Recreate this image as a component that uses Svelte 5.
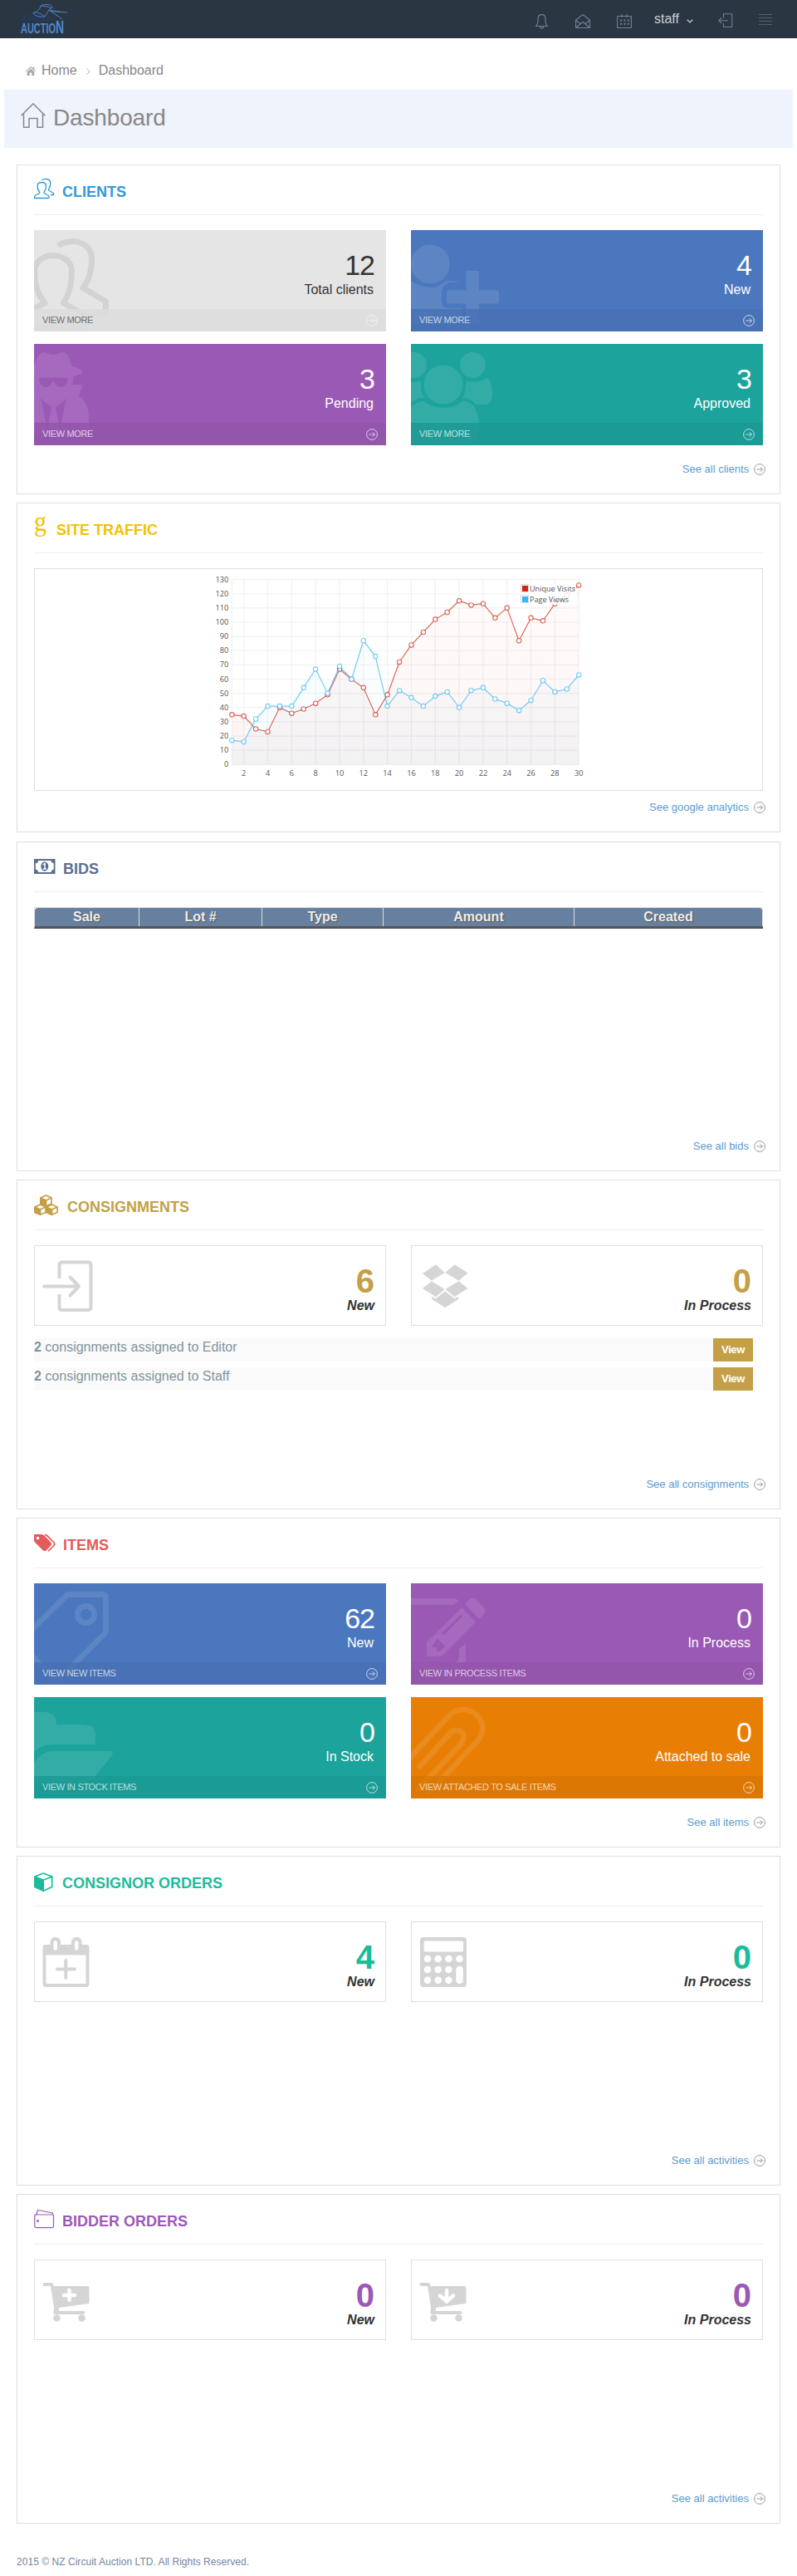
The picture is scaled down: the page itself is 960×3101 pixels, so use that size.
<script>
  const art = {
    people: '<g fill="none" stroke="#000" stroke-opacity=".08" stroke-width="7"><path d="M-15 102 13 88C4 77 .5 62 .5 50c0-12 10.500-19.500 22.500-19.500S45.500 38 45.500 50c0 12-2.500 26-10 38l27 14.500V116H-15" stroke-linejoin="round"/><path d="M29 19c5-4 11-5.500 18-5.500 12 0 22.500 8.500 22.500 20.500 0 14-2.500 26-10.500 35.500L86.500 86v13H73" stroke-linejoin="round"/></g>',
    add: '<circle cx="23.300" cy="41" r="23.500"/><path d="M0 61Q23 77 43 61Q52 60 58 63H45Q37 67 37 75V86Q37 94 45 94H61V112H0ZM45 72.500H66.500V50.500Q66.500 49 68 49H80.500Q82 49 82 50.500V72.500H104Q106 72.500 106 74.500V86.500Q106 88.500 104 88.500H82V112H66.500V88.500H45Q43 88.500 43 86.500V74.500Q43 72.500 45 72.500Z"/>',
    spy: '<path fill-rule="evenodd" d="M0 27C4 16 7 10 12 10C16 10 18 13 23 13S30 10 34 10C40 10 43 17 46 27Q58 30 58 34Q56 38 47 39V43Q47 47 45 49H58.500L54 63Q66 70 66 90V112H0V49H1L0 46ZM6 41Q23 40 41 41C40 49 37 52 32 52C26 52 25 45 23 45S20 52 14 52C9 52 6 47 6 41ZM8 65Q12 70 21 76L16 103ZM39 65Q34 72 26 76L31 103Z"/>',
    group: '<circle cx="3.500" cy="25.500" r="15.500"/><circle cx="74.500" cy="25.500" r="15.500"/><circle cx="39" cy="49" r="23.500"/><path d="M0 46 12 45V52Q12 59 17 65Q7 65 0 71ZM66 45Q81 48 91 41C97 43 98 54 98 62Q97 73 89 73H78Q72 65 62 65Q67 58 66 45ZM0 76Q7 69 15 69Q39 85 63 69C77 69 82 83 82 103Q82 120 67 120H0Z"/>',
    tag: '<g fill="none" stroke="#fff" stroke-width="6.800"><path d="M-2 55 39.500 14.500Q41 13.500 43 13.500H82Q86.500 13.500 86.500 17V56Q86.500 59 84.500 61L32 114Q28 117 24 114L-4 86"/><circle cx="62.500" cy="37.500" r="10.200"/></g>',
    pencil: '<path fill-rule="evenodd" d="M0 18H50Q55 18 57 21L53 25Q51 26 49 26H0ZM66 73V91Q66 104 50 104Q40 104 0 104V96H50Q58 96 58 87V79ZM61 29.500 78 46.500 37 88H19V71ZM65 25 71 19Q74 16 78 19L88 29Q91 33 88 37L82 43ZM38 59Q37 62 40 62L62 40Q62 37 60 38ZM26 75 32 66 41 76 35 82H31V77H26Z"/>',
    folder: '<path d="M0 18H14Q27 20 27 33H60Q74 34 74 46V57H22Q9 57 0 66ZM22 65H92Q96 65 94 70L74 95Q68 103 57 103H0V79Q10 65 22 65Z"/>',
    clip: '<g fill="none" stroke="#fff" stroke-width="6.600" stroke-linecap="round"><path d="M-6 78 46 22C55 13 68 13 77 20C89 30 89 43 80 53L35 101 20 115"/><path d="M11 83 47 43.500C53 37 61 40 63 45C65 50 62 54 60 56.500L22 97 8 111"/></g>',
    login: '<g fill="none" stroke="#d5d5d5" stroke-width="4"><path d="M30.500 40V24Q30.500 20.500 34 20.500H65Q68.500 20.500 68.500 24V75Q68.500 78 65 78H34Q30.500 78 30.500 75V59"/><path d="M12 49.500H53M43.500 38.500 54 49.500 43.500 60.500" stroke-linecap="round" stroke-linejoin="round"/></g>',
    boxes: '<path d="M30 23 41 33 25 43 13.500 34ZM52.500 23 69 33.500 57.500 43 41 33ZM25 43 41 53 30 62.500 13.500 52ZM57.500 43 69 52 52.500 62.500 41 53ZM41 55 52.500 64 57.500 61.500V65L41 75.500 25 65V61.500L30 64Z" stroke="#fff" stroke-width=".6"/>',
    calendar: '<path fill-rule="evenodd" d="M14 28H19.500V25A6.200 6.200 0 0 1 32 25V28H45V25A6.200 6.200 0 0 1 57.500 25V28H62.500Q66.500 28 66.500 32V75Q66.500 79 62.500 79H14Q10.500 79 10.500 75V32Q10.500 28 14 28ZM14.500 40.500V75H62.500V40.500ZM23.500 25V33A2.300 2.300 0 0 0 28 33V25A2.300 2.300 0 0 0 23.500 25ZM49 25V33A2.300 2.300 0 0 0 53.500 33V25A2.300 2.300 0 0 0 49 25Z"/><path d="M38.300 47V68M28 57.500H49" stroke="#d5d5d5" stroke-width="4" stroke-linecap="round"/>',
    calculator: '<rect x="11" y="19" width="56" height="60" rx="4"/><g fill="#fff"><rect x="15.500" y="23.500" width="47.500" height="13" rx="2"/><circle cx="20" cy="45" r="4.300"/><circle cx="32.700" cy="45" r="4.300"/><circle cx="45.400" cy="45" r="4.300"/><circle cx="58.500" cy="45" r="4.300"/><circle cx="20" cy="58" r="4.300"/><circle cx="32.700" cy="58" r="4.300"/><circle cx="45.400" cy="58" r="4.300"/><circle cx="20" cy="70.700" r="4.300"/><circle cx="32.700" cy="70.700" r="4.300"/><circle cx="45.400" cy="70.700" r="4.300"/><rect x="54.200" y="53.700" width="8.600" height="21.300" rx="4.300"/></g>',
    cartadd: '<path d="M12 28H21Q23 28 23.500 32H64Q66.500 32 66.500 35V53L30 58V62H59Q61.500 62 61.500 64T59 66H25Q23 66 23.500 63L24 58 20 32H12Q10.500 32 10.500 30T12 28Z"/><circle cx="27.500" cy="70.500" r="4.300"/><circle cx="57.500" cy="70.500" r="4.300"/><path d="M42.500 37V49M36 43H49" stroke="#fff" stroke-width="4.500" stroke-linecap="round"/>',
    cartdown: '<path d="M12 28H21Q23 28 23.500 32H64Q66.500 32 66.500 35V53L30 58V62H59Q61.500 62 61.500 64T59 66H25Q23 66 23.500 63L24 58 20 32H12Q10.500 32 10.500 30T12 28Z"/><circle cx="27.500" cy="70.500" r="4.300"/><circle cx="57.500" cy="70.500" r="4.300"/><path d="M43 37V50M35 43.500 43 50.500 51 43.500" fill="none" stroke="#fff" stroke-width="4.500" stroke-linecap="round"/>',
    hClients: '<g fill="none" stroke="currentColor" stroke-width="1.300" stroke-linejoin="round"><path d="M.500 19.500V18Q.5 17 1.500 16.300L6.200 13.700Q7.300 13 6.500 12C4.500 9.500 3.900 7 4.200 4C4.500 1.500 7 .5 9.300 .5S14 1.500 14.400 4C14.700 7 14 9.500 12.200 12Q11.400 13 12.500 13.700L17 16.300Q18 17 18 18V18.700Q18 19.500 17 19.500Z"/><path d="M9.500-2C11-3.300 13-3.700 14.800-3.500C18-3.300 19.800-1 19.800 2C19.800 5 19 7 17.500 8.800Q16.800 9.700 18 10.300L22.500 13Q23.500 13.500 23.500 14.500V15.500H20"/></g>',
    hGoogle: '<text x="0" y="13" font-family="Liberation Serif, serif" font-size="33" font-weight="400" fill="currentColor" textLength="15" lengthAdjust="spacingAndGlyphs">g</text>',
    hBids: '<path fill-rule="evenodd" fill="currentColor" d="M0 0H25.500V18H0ZM1.800 5.500V12.500Q4.800 13 5.300 16H20.300Q20.800 13 23.700 12.500V5.500Q20.800 5 20.300 2H5.300Q4.800 5 1.800 5.500Z"/><ellipse cx="12.800" cy="9" rx="4.500" ry="5.700" fill="currentColor"/><path d="M10.800 7 13 5.500V12M10.800 12H15" stroke="#fff" stroke-width="1.500" fill="none"/>',
    hCubes: '<g stroke="currentColor" stroke-width="1.700" stroke-linejoin="round" fill="#fff"><path d="M14.500-2 21 .8V8L14.500 11 8 8V.8ZM7.500 9 14 12V18.500L7.500 21.300 1 18.500V12ZM21.500 9 28 12V18.500L21.500 21.300 15 18.500V12Z"/><path fill="currentColor" d="M8 1 14.500 4V11L8 8ZM1 12 7.500 15V21L1 18.500ZM15 12 21.500 15V21L15 18.500Z"/><path fill="none" d="M14.500 4 21 1M7.500 15 14 12M21.500 15 28 12"/></g>',
    hTags: '<path fill="currentColor" fill-rule="evenodd" d="M0 0Q0-1 1-1H9Q11-1 12.500 .5L20 8.500Q22 11 20 13L14.500 18.500Q13 20 11 18.500L1.500 9Q0 7.500 0 6ZM4.500 1.700A1.800 1.800 0 1 0 4.600 1.700Z"/><path d="M13-.3Q15-.2 16.500 1.300L24 9Q25.700 11 24 12.500L17 19.300" fill="none" stroke="currentColor" stroke-width="1.700"/>',
    hCube: '<path fill="none" stroke="currentColor" stroke-width="1.700" stroke-linejoin="round" d="M11.300 0 21.700 4V16.500L11.300 21.300 .9 16.500V4ZM.9 4 11.300 8.200 21.700 4"/><path fill="currentColor" d="M1 4 12 8.200V21.700L1 17Z"/>',
    hWallet: '<g fill="none" stroke="currentColor" stroke-width="1.200" stroke-linejoin="round"><path d="M3 3.300.8 4.500V18Q.8 19.700 2.500 19.700H22Q23.500 19.700 23.500 18V5Q23.500 4 22 4H2M3 3.500 4.500-1.500 22.500 2V4"/></g><circle cx="4.500" cy="11.500" r="1.500" fill="currentColor"/>'
  };
  const sections = [
    { title: 'CLIENTS', color: '#3498db', icon: 'hClients', w: 34, link: 'See all clients', tiles: [
      { n: 12, label: 'Total clients', more: 'VIEW MORE', bg: '#e5e5e5', art: 'people', light: true },
      { n: 4, label: 'New', more: 'VIEW MORE', bg: '#4b77be', art: 'add' },
      { n: 3, label: 'Pending', more: 'VIEW MORE', bg: '#9b59b6', art: 'spy' },
      { n: 3, label: 'Approved', more: 'VIEW MORE', bg: '#1ca39c', art: 'group' }] },
    { title: 'SITE TRAFFIC', color: '#f3c200', icon: 'hGoogle', w: 27, link: 'See google analytics', chart: true },
    { title: 'BIDS', color: '#5c6f91', icon: 'hBids', w: 35, link: 'See all bids', table: true },
    { title: 'CONSIGNMENTS', color: '#c49f47', icon: 'hCubes', w: 40, link: 'See all consignments', boxes: [
      { n: 6, label: 'New', art: 'login' }, { n: 0, label: 'In Process', art: 'boxes' }], rows: ['Editor', 'Staff'] },
    { title: 'ITEMS', color: '#e35b5a', icon: 'hTags', w: 35, link: 'See all items', tiles: [
      { n: 62, label: 'New', more: 'VIEW NEW ITEMS', bg: '#4b77be', art: 'tag' },
      { n: 0, label: 'In Process', more: 'VIEW IN PROCESS ITEMS', bg: '#9b59b6', art: 'pencil' },
      { n: 0, label: 'In Stock', more: 'VIEW IN STOCK ITEMS', bg: '#1ca39c', art: 'folder' },
      { n: 0, label: 'Attached to sale', more: 'VIEW ATTACHED TO SALE ITEMS', bg: '#e87e04', art: 'clip' }] },
    { title: 'CONSIGNOR ORDERS', color: '#1bbc9b', icon: 'hCube', w: 34, link: 'See all activities', boxes: [
      { n: 4, label: 'New', art: 'calendar' }, { n: 0, label: 'In Process', art: 'calculator' }] },
    { title: 'BIDDER ORDERS', color: '#9b59b6', icon: 'hWallet', w: 34, link: 'See all activities', boxes: [
      { n: 0, label: 'New', art: 'cartadd' }, { n: 0, label: 'In Process', art: 'cartdown' }] }
  ];

  const visits = [35, 34, 25, 23, 40, 36, 39, 43, 49, 67, 60, 54, 35, 49, 72, 84, 93, 102, 107, 115, 112, 113, 103, 110, 87, 103, 101, 113, 119, 126];
  const views = [17, 16, 32, 41, 41, 41, 54, 67, 50, 69, 60, 87, 76, 41, 52, 47, 41, 48, 51, 40, 52, 54, 46, 43, 38, 45, 59, 51, 53, 63];
  const px = (d) => 237.300 + (d - 1) * 14.410;
  const py = (v) => 235.300 - v * 1.713;
  const line = (s) => s.map((v, i) => `${px(i + 1).toFixed(1)},${py(v).toFixed(1)}`).join(' ');
  const area = (s) => `${px(1)},${py(0)} ${line(s)} ${px(30)},${py(0)}`;
  const series = [{ data: visits, color: '#d12610' }, { data: views, color: '#37b7f3' }];
  const ticks = Array.from({ length: 14 }, (_, i) => i * 10);
  const days = Array.from({ length: 15 }, (_, i) => (i + 1) * 2);
</script>

{#snippet arrow()}
  <svg class="arrow" width="14" height="14" viewBox="0 0 14 14" fill="none" stroke="currentColor" stroke-width="1">
    <circle cx="7" cy="7" r="6.400" /><path d="M3.500 7h7M7.800 4.300 10.500 7 7.800 9.700" />
  </svg>
{/snippet}

<header>
  <svg class="logo" width="62" height="42" viewBox="0 0 62 42">
    <text x="3" y="25" class="script" textLength="32" lengthAdjust="spacingAndGlyphs">Circuit</text>
    <g fill="none" stroke="#4a7fc4" stroke-width="1">
      <path d="M24 7Q26 5 32 5.500T38 9L34 12 29 20Q24 21 19 19T15 15.500Q20 13 29 20M15 15.500Q20 15 23 10L24 7Q32 7 37 10M34 12 50 23M35 13.500 56 15M36 12.500 49 14.500" />
    </g>
    <text x="0" y="40" class="word" font-size="17" textLength="42" lengthAdjust="spacingAndGlyphs">AUCTIO</text>
    <text x="42" y="40" class="word" font-size="22" textLength="10" lengthAdjust="spacingAndGlyphs">N</text>
  </svg>
  <nav>
    <svg width="15" height="18" viewBox="0 0 15 18"><path d="M.600 14.500Q3 12 3 9V5Q3 .6 7.500 .6T12 5V9Q12 12 14.400 14.500ZM5.300 14.700Q5.500 17 7.500 17T9.700 14.700" /></svg>
    <svg class="mail" width="18" height="18" viewBox="0 0 18 18"><path d="M.600 7 9 .6 17.400 7V16.500H.6ZM.6 16.500 7 11 9 9.500 11 11 17.400 16.500M.6 7 3 9.500 6.800 11.500M17.400 7 15 9.500 11.200 11.500" /></svg>
    <svg class="cal" width="18" height="18" viewBox="0 0 18 18"><path d="M.600 2.500H17.400V16.500H.6ZM6 0V4M12 0V4" /><path stroke-width="2" stroke-dasharray="2 2.400" d="M4 7.500H15M4 11.800H15" /></svg>
    <span class="user">staff</span>
    <svg class="chev" width="8" height="5" viewBox="0 0 8 5"><path d="M.700 .7 4 3.900 7.300 .7" /></svg>
    <svg class="out" width="18" height="18" viewBox="0 0 18 18"><path d="M6.500 5.500V.7H16.700V16.500H6.500V12M12 8.700H1M4 5.500.8 8.700 4 11.800" /></svg>
    <svg class="bars" width="16" height="14" viewBox="0 0 16 14"><path d="M0 1.500H16M0 5.500H16M0 9.500H16M0 13.500H16" /></svg>
  </nav>
</header>

<div class="crumbs">
  <svg width="12" height="11" viewBox="0 0 12 11"><path fill="#aaa" d="M6 0 8.500 2.200V.8H10.200V3.700L12 5.400 11.300 6.200 6 1.500.7 6.200 0 5.400ZM6 2.800 10.300 6.600V11H7.200V7.500H4.800V11H1.700V6.600Z" /></svg>
  <span>Home</span>
  <svg class="sep" width="5" height="8" viewBox="0 0 5 8"><path fill="none" stroke="#aaa" d="M.500 .5 4 4 .5 7.500" /></svg>
  <span>Dashboard</span>
</div>

<div class="title">
  <svg width="30" height="31" viewBox="0 0 30 31"><path fill="none" stroke="#888" stroke-width="1.500" stroke-linejoin="round" d="M.600 15.300 15 .8 29.400 15.300M3.500 13V29.300H10V18.500H20V29.300H26.500V13" /></svg>
  <h1>Dashboard</h1>
</div>

<main>
  {#each sections as s}
    <section class:traffic={s.chart} style="--accent: {s.color}">
      <h2>
        <svg width={s.w} height="20" viewBox="0 0 {s.w} 20">{@html art[s.icon]}</svg>
        <span>{s.title}</span>
      </h2>
      {#if s.tiles}
        <div class="grid">
          {#each s.tiles as t}
            <div class="tile" class:light={t.light} style="background: {t.bg}">
              <svg class="art" width="424" height="122" viewBox="0 0 424 122"><g fill={t.light ? 'none' : '#fff'} opacity={t.light ? 1 : 0.1}>{@html art[t.art]}</g></svg>
              <div class="num">{t.n}</div>
              <div class="lab">{t.label}</div>
              <div class="more" style="--base: {t.bg}"><span>{t.more}</span>{@render arrow()}</div>
            </div>
          {/each}
        </div>
      {/if}
      {#if s.boxes}
        <div class="grid">
          {#each s.boxes as b}
            <div class="box">
              <svg width="80" height="95" viewBox="1 1 80 95" fill="#d5d5d5">{@html art[b.art]}</svg>
              <div class="fig"><strong>{b.n}</strong><em>{b.label}</em></div>
            </div>
          {/each}
        </div>
      {/if}
      {#if s.rows}
        <div class="rows">
          {#each s.rows as who}
            <div class="row"><span><b>2</b> consignments assigned to {who}</span><button>View</button></div>
          {/each}
        </div>
      {/if}
      {#if s.chart}
        <div class="chart">
          <svg width="876" height="266" viewBox="0 0 876 266">
            <g stroke="#f1f1f1" stroke-width="1.200">
              {#each ticks as t}<path d="M{px(1)} {py(t)}H{px(30)}" />{/each}
              <path d="M{px(1)} {py(130)}V{py(0)}" />
              {#each days as d}<path d="M{px(d)} {py(130)}V{py(0)}" />{/each}
            </g>
            <defs>
              {#each series as r, i}
                <linearGradient id="fade{i}" x1="0" y1="0" x2="0" y2="1"><stop offset="0" stop-color={r.color} stop-opacity=".015" /><stop offset="1" stop-color={r.color} stop-opacity=".05" /></linearGradient>
              {/each}
            </defs>
            {#each series as r, i}
              <polygon points={area(r.data)} fill="url(#fade{i})" />
              <polyline points={line(r.data)} fill="none" stroke={r.color} stroke-opacity=".7" stroke-width="1.200" />
              {#each r.data as v, k}<circle cx={px(k + 1)} cy={py(v)} r="2.700" fill="#fff" stroke={r.color} stroke-opacity=".7" stroke-width="1.100" />{/each}
            {/each}
            <g class="axis">
              {#each ticks as t}<text x="233.300" y={py(t) + 3} text-anchor="end">{t}</text>{/each}
              {#each days as d}<text x={px(d)} y="249" text-anchor="middle">{d}</text>{/each}
              <rect x="584" y="17" width="68" height="26" fill="#fff" fill-opacity=".85" />
              <rect x="585.500" y="18.500" width="9" height="9" fill="#fff" stroke="#ddd" /><rect x="587" y="20" width="7" height="7" fill="#d12610" />
              <rect x="585.500" y="31.500" width="9" height="9" fill="#fff" stroke="#ddd" /><rect x="587" y="33" width="7" height="7" fill="#37b7f3" />
              <text x="596" y="27" textLength="55" lengthAdjust="spacingAndGlyphs">Unique Visits</text>
              <text x="596" y="39.700" textLength="47" lengthAdjust="spacingAndGlyphs">Page Views</text>
            </g>
          </svg>
        </div>
      {/if}
      {#if s.table}
        <div class="thead"><span>Sale</span><span>Lot #</span><span>Type</span><span>Amount</span><span>Created</span></div>
      {/if}
      <a href="#all">{s.link}{@render arrow()}</a>
    </section>
  {/each}
</main>
<footer>2015 © NZ Circuit Auction LTD. All Rights Reserved.</footer>

<style>
  :global(body) { margin: 0; background: #fff; font-family: "Liberation Sans", Arial, sans-serif; color: #333; }
  :global(*) { box-sizing: border-box; }
  svg { display: block; flex: none; }
  header { height: 46px; background: #2b3643; display: flex; justify-content: space-between; padding: 0 30px 0 25px; }
  .logo { overflow: visible; }
  .word { font-family: "Liberation Sans", sans-serif; font-weight: bold; fill: #5088cf; }
  .script { font-family: "Liberation Serif", serif; font-style: italic; font-size: 12px; fill: #213d76; }
  nav { display: flex; align-items: flex-start; padding-top: 17px; }
  nav path { fill: none; stroke: #708096; stroke-width: 1.1; }
  .mail { margin-left: 33px; }
  .cal { margin-left: 32px; }
  .user { margin: -3px 0 0 27px; width: 30px; font-size: 16px; line-height: 18px; color: #c6cfda; }
  .chev { margin: 6px 0 0 9px; }
  .chev path { stroke: #c6cfda; stroke-width: 1.3; }
  .out { margin: -1px 0 0 30px; }
  .bars { margin: -1px 0 0 31px; }
  .bars path { stroke: #515f70; stroke-width: 1; }
  .cal path:last-child { stroke-width: 2; }
  .crumbs { height: 62px; display: flex; align-items: center; padding: 16px 0 0 31px; font-size: 16px; line-height: 18px; color: #888; }
  .crumbs span { margin-left: 7px; }
  .crumbs .sep { margin: 2px 0 0 11px; }
  .crumbs .sep + span { margin-left: 10px; }
  .title { height: 70px; margin: 0 5px; background: #eff3fb; display: flex; padding: 16px 0 0 20px; }
  h1 { margin: 2px 0 0 9px; font-size: 28px; line-height: 32px; font-weight: 400; letter-spacing: -.15px; color: #888; }
  main { display: flex; flex-direction: column; gap: 10px; padding: 20px 20px 0; }
  section { height: 397px; border: 1px solid #dedede; padding: 20px; display: flex; flex-direction: column; }
  .traffic { margin-bottom: 1px; }
  h2 { margin: 0 0 18px; height: 40px; border-bottom: 1px solid #eee; display: flex; color: var(--accent); font-size: 18px; line-height: 20px; flex: none; }
  h2 svg { overflow: visible; }
  h2 span { margin-top: 2px; }
  .grid { display: grid; grid-template-columns: 424px 424px; gap: 15px 30px; }
  .tile { position: relative; height: 122px; overflow: hidden; color: #fff; text-align: right; }
  .tile.light { color: #333; }
  .art { position: absolute; inset: 0; }
  .num { font-size: 34px; line-height: 40px; margin: 22px 14px 0 0; letter-spacing: -1px; }
  .lab { font-size: 16px; line-height: 20px; margin: 0 15px 0 0; }
  .more { position: absolute; left: 0; right: 0; bottom: 0; height: 27px; display: flex; justify-content: space-between; align-items: center; padding: 0 10px; font-size: 11px; letter-spacing: -.35px; color: rgba(255, 255, 255, .7); background: color-mix(in srgb, color-mix(in srgb, var(--base), #000 6%) 80%, transparent); }
  .more span { margin-top: -1px; }
  .more .arrow { margin-top: 1px; }
  .light .more { background: rgba(221, 221, 221, .85); color: #6e6e6e; }
  .light .more .arrow { color: #f4f4f4; }
  .box { height: 97px; border: 1px solid #dedede; display: flex; justify-content: space-between; padding-right: 13px; }
  .fig { display: flex; flex-direction: column; align-items: flex-end; }
  .fig strong { font-size: 40px; line-height: 40px; margin-top: 22px; color: var(--accent); }
  .fig em { font-size: 16px; line-height: 18px; font-weight: bold; margin-top: 1px; }
  .rows { display: flex; flex-direction: column; gap: 7px; margin: 15px 12px 0 0; }
  .row { height: 28px; display: flex; justify-content: space-between; background: #fafafa; color: #7f949e; font-size: 16px; line-height: 21px; }
  button { width: 48px; height: 28px; border: 0; padding: 0 0 1px; background: #c49f47; color: #fff; font: bold 13px "Liberation Sans", sans-serif; letter-spacing: -.4px; }
  .chart { height: 268px; border: 1px solid #ddd; }
  .axis text { font-family: "Open Sans", sans-serif; font-size: 9.2px; fill: #545454; }
  .thead { display: grid; grid-template-columns: 126px 148px 146px 230px 1fr; height: 26px; border-top: 1px solid #ddd; border-bottom: 3px solid #555; border-left: 1px solid #ddd; }
  .thead span { background: #67809f; border-right: 1px solid #ddd; text-align: center; color: #eee; font-weight: bold; font-size: 16px; line-height: 22px; text-shadow: 1px 1px 1px #555; }
  .thead span:first-child { border-top-left-radius: 4px; }
  .thead span:last-child { border-top-right-radius: 4px; }
  a { margin: auto -3px 1px 0; height: 14px; display: flex; justify-content: flex-end; color: #5b9bd1; font-size: 13px; line-height: 14px; text-decoration: none; position: relative; top: -1px; }
  a .arrow { color: #999; margin-left: 6px; }
  footer { padding: 36px 20px 0; font-size: 12px; line-height: 20px; letter-spacing: .04px; color: #74869f; }
</style>
